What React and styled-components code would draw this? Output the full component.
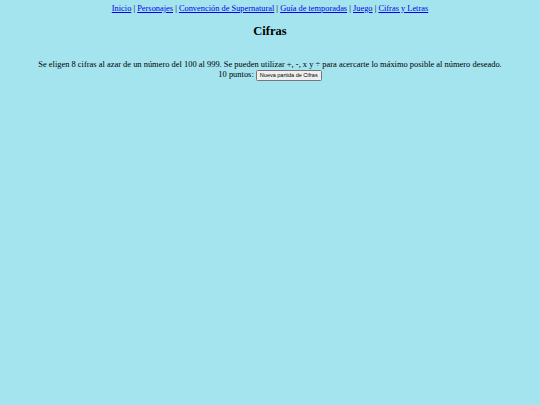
import React from 'react';
import styled, { createGlobalStyle } from 'styled-components';

const GlobalStyle = createGlobalStyle`
  html, body {
    margin: 0;
    padding: 0;
    background-color: #A4E4EE;
  }
  body {
    font-family: "Liberation Serif", "Times New Roman", serif;
    font-size: 8.4px;
    color: #000;
  }
`;

const Page = styled.div`
  padding: 4px;
  min-height: 397px;
`;

const Menu = styled.nav`
  text-align: center;
  font-size: 8.4px;
  line-height: 9px;
`;

const MenuLink = styled.a`
  color: #0000EE;
  text-decoration: underline;
`;

const Title = styled.h2`
  text-align: center;
  font-size: 12.5px;
  font-weight: bold;
  margin: 11px 0 20px;
`;

const Intro = styled.p`
  text-align: center;
  margin: 0;
  line-height: 10px;
  font-size: 8.45px;
`;

const NewGame = styled.button`
  font-family: "Liberation Sans", Arial, sans-serif;
  font-size: 5.5px;
  padding: 1px 3px;
  margin: 0;
  background: #efefef;
  border: 1px solid #767676;
  border-radius: 1.5px;
  color: #000;
  line-height: 7px;
  vertical-align: middle;
`;

const links = [
  'Inicio',
  'Personajes',
  'Convención de Supernatural',
  'Guía de temporadas',
  'Juego',
  'Cifras y Letras',
];

export default function App() {
  return (
    <>
      <GlobalStyle />
      <Page>
        <Menu>
          {links.map((l, i) => (
            <React.Fragment key={l}>
              {i > 0 && ' | '}
              <MenuLink href="#">{l}</MenuLink>
            </React.Fragment>
          ))}
        </Menu>
        <Title>Cifras</Title>
        <Intro>
          Se eligen 8 cifras al azar de un número del 100 al 999. Se pueden utilizar +, -, x y ÷ para
          acercarte lo máximo posible al número deseado.
          <br />
          10 puntos: <NewGame>Nueva partida de Cifras</NewGame>
        </Intro>
      </Page>
    </>
  );
}
